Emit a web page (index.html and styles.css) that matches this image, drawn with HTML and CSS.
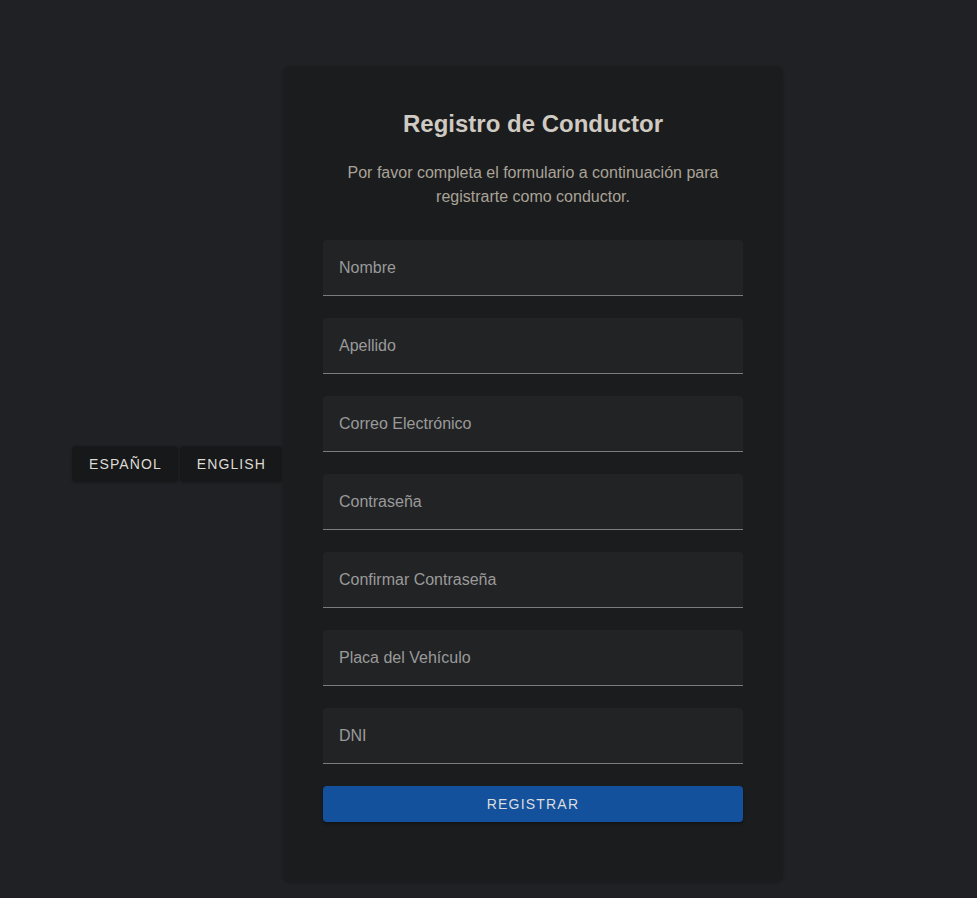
FILE: index.html
```html
<!DOCTYPE html>
<html lang="es">
<head>
<meta charset="utf-8">
<title>Registro de Conductor</title>
<link rel="stylesheet" href="styles.css">
</head>
<body>
<div class="page">
  <div class="lang">
    <button class="lang-btn">Español</button>
    <button class="lang-btn">English</button>
  </div>
  <main class="card">
    <h1 class="title">Registro de Conductor</h1>
    <p class="subtitle">Por favor completa el formulario a continuación para registrarte como conductor.</p>
    <form class="form">
      <div class="field"><span class="label">Nombre</span></div>
      <div class="field"><span class="label">Apellido</span></div>
      <div class="field"><span class="label">Correo Electrónico</span></div>
      <div class="field"><span class="label">Contraseña</span></div>
      <div class="field"><span class="label">Confirmar Contraseña</span></div>
      <div class="field"><span class="label">Placa del Vehículo</span></div>
      <div class="field"><span class="label">DNI</span></div>
      <button type="button" class="submit">Registrar</button>
    </form>
  </main>
</div>
</body>
</html>
```
FILE: styles.css
```css
* { box-sizing: border-box; }
html, body { margin: 0; padding: 0; }
body {
  background: #202124;
  font-family: "Liberation Sans", Arial, sans-serif;
  height: 898px;
  overflow: hidden;
}
.page {
  display: flex;
  align-items: flex-start;
  padding: 66px 0 0 72px;
}
.lang {
  display: flex;
  gap: 2px;
  margin-top: 380px;
  margin-right: 1px;
}
.lang-btn {
  height: 36px;
  padding: 0 16px 0 17px;
  background: #17181a;
  color: #dedad4;
  border: none;
  border-radius: 4px;
  font-family: "Liberation Sans", Arial, sans-serif;
  font-size: 14px;
  letter-spacing: 1.1px;
  text-transform: uppercase;
  box-shadow: 0 1px 3px rgba(0,0,0,0.25);
}
.card {
  width: 500px;
  background: #1b1c1e;
  border-radius: 8px;
  padding: 42px 40px 60px;
  box-shadow: 0 1px 3px rgba(0,0,0,0.2);
}
.title {
  margin: 0;
  text-align: center;
  font-size: 24px;
  line-height: 32px;
  font-weight: bold;
  color: #cfcac2;
}
.subtitle {
  margin: 21px 10px 0;
  text-align: center;
  font-size: 16px;
  line-height: 24px;
  color: #aaa397;
}
.form {
  display: flex;
  flex-direction: column;
  gap: 22px;
  margin-top: 31px;
}
.field {
  height: 56px;
  background: #222325;
  border-radius: 4px 4px 0 0;
  border-bottom: 1px solid #7c7c7c;
  display: flex;
  align-items: center;
  padding: 1px 16px 0;
}
.label {
  font-size: 16px;
  color: #9a9a9a;
}
.submit {
  height: 36px;
  background: #13519c;
  color: #dcdcdc;
  border: none;
  border-radius: 4px;
  font-family: "Liberation Sans", Arial, sans-serif;
  font-size: 14px;
  letter-spacing: 1.2px;
  text-transform: uppercase;
  box-shadow: 0 2px 3px rgba(0,0,0,0.3);
}
```
